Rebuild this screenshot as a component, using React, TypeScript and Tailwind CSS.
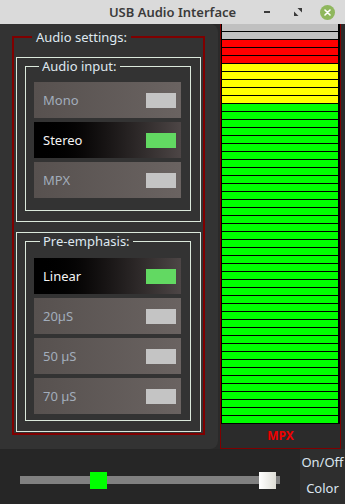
import React from "react";

const segClasses: string[] = [
  ...Array(2).fill("bg-[#c0c0c0]"),
  ...Array(3).fill("bg-[#ff0000]"),
  ...Array(5).fill("bg-[#ffff00]"),
  ...Array(40).fill("bg-[#00ff00]"),
];

function Row({ label, on }: { label: string; on?: boolean }) {
  return (
    <div
      className={
        "h-[36px] flex items-center justify-between pl-[9px] pr-[5px] " +
        (on
          ? "bg-linear-to-r from-black to-[#4d4646]"
          : "bg-linear-to-r from-[#57514f] to-[#6a6361]")
      }
    >
      <span className={"text-[13px] leading-[16px] " + (on ? "text-[#f4f4f4]" : "text-[#a2adbb]")}>{label}</span>
      <div className={"w-[30px] h-[15px] " + (on ? "bg-[#62d962]" : "bg-[#c4c4c4]")} />
    </div>
  );
}

function Group({
  title,
  rows,
  pt,
  pb,
  legendMl,
}: {
  title: string;
  rows: { label: string; on?: boolean }[];
  pt: string;
  pb: string;
  legendMl: string;
}) {
  return (
    <div className="border border-[#dbe9dc] pb-[10px]">
      <fieldset className={"ml-[8px] w-[166px] border border-[#dbe9dc] pl-[8px] pr-[9px] " + pb}>
        <legend className={"px-[3px] text-[13px] leading-[16px] text-[#dfe8f0] " + legendMl}>{title}</legend>
        <div className={"flex flex-col gap-[4px] " + pt}>
          {rows.map((r) => (
            <Row key={r.label} label={r.label} on={r.on} />
          ))}
        </div>
      </fieldset>
    </div>
  );
}

export default function App() {
  return (
    <div className="w-[345px] h-[504px] bg-[#262626] flex flex-col overflow-hidden font-['Noto_Sans',sans-serif]">
      {/* Title bar */}
      <div className="h-[24px] shrink-0 bg-[#dadada] relative flex items-center justify-center">
        <span className="text-[13px] font-semibold text-[#3b3b3b] leading-[16px]">USB Audio Interface</span>
        <div className="absolute right-[2px] top-0 h-[24px] flex items-center">
          <div className="w-[6px] h-[2px] bg-[#3a3a3a] mr-[24px]" />
          <svg width="8" height="8" viewBox="0 0 8 8" className="mr-[18px]">
            <path d="M3.5 0 H8 V4.5 Z" fill="#3a3a3a" />
            <path d="M0 3.5 V8 H4.5 Z" fill="#3a3a3a" />
          </svg>
          <div className="w-[15px] h-[15px] rounded-full bg-[#8fb75d] flex items-center justify-center mr-[8px]">
            <svg width="7" height="7" viewBox="0 0 7 7">
              <path d="M1 1 L6 6 M6 1 L1 6" stroke="white" strokeWidth="1.6" strokeLinecap="round" />
            </svg>
          </div>
        </div>
      </div>

      {/* Main */}
      <div className="h-[425px] shrink-0 flex bg-[#2a2a2a]">
        <div className="w-[218px] h-full bg-[#333333] rounded-r-[8px] pt-[5px]">
          <fieldset className="ml-[12px] w-[193px] border-2 border-[#7f0000] px-[2px] pb-[1px]">
            <legend className="ml-[16px] px-[4px] text-[13px] leading-[16px] text-[#dfe8f0]">Audio settings:</legend>
            <div className="mt-[12px]">
              <Group
                title="Audio input:"
                rows={[{ label: "Mono" }, { label: "Stereo", on: true }, { label: "MPX" }]}
                pt="pt-[8px]"
                pb="pb-[12px]"
                legendMl="ml-[5px]"
              />
            </div>
            <div className="mt-[10px]">
              <Group
                title="Pre-emphasis:"
                rows={[
                  { label: "Linear", on: true },
                  { label: "20µS" },
                  { label: "50 µS" },
                  { label: "70 µS" },
                ]}
                pt="pt-[9px]"
                pb="pb-[6px]"
                legendMl="ml-[6px]"
              />
            </div>
          </fieldset>
        </div>
        <div className="w-[2px]" />
        {/* Meter */}
        <div className="w-[121px] h-[425px] border-x border-b border-[#7f0000] flex flex-col">
          <div className="bg-black pl-[1px] pr-[2px]">
            {segClasses.map((c, i) => (
              <div key={i} className={"h-[7px] mb-[1px] " + c} />
            ))}
          </div>
          <div className="flex-1 bg-[#2b2b2b] flex items-center justify-center">
            <span className="text-[12px] font-bold text-[#ee0000] leading-[14px]">MPX</span>
          </div>
        </div>
      </div>

      {/* Bottom */}
      <div className="flex-1 flex">
        <div className="w-[300px] h-full relative">
          <div className="absolute left-[20px] top-[27px] w-[260px] h-[8px] bg-[#808080]" />
          <div className="absolute left-[90px] top-[23px] w-[17px] h-[17px] bg-[#00ff00]" />
          <div className="absolute left-[259px] top-[23px] w-[17px] h-[17px] bg-linear-to-r from-white to-[#deddd6]" />
        </div>
        <div className="w-[45px] h-full bg-[#2e2e2e] flex flex-col">
          <div className="h-[27px] flex items-center justify-center text-[13px] text-[#dce6f0] whitespace-nowrap">On/Off</div>
          <div className="h-[26px] flex items-center justify-center text-[13px] text-[#dce6f0]">Color</div>
        </div>
      </div>
    </div>
  );
}
